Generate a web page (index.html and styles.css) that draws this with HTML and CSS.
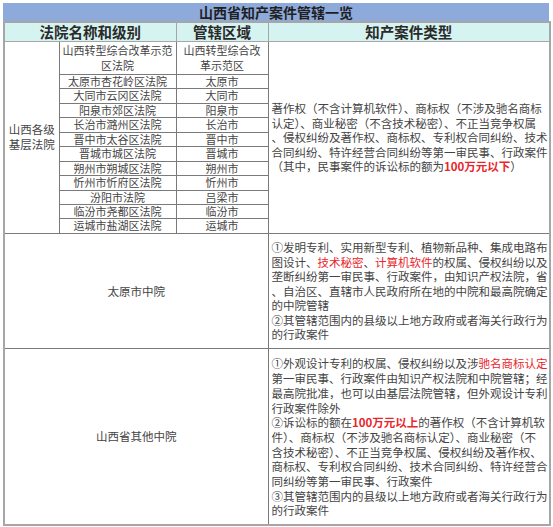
FILE: index.html
```html
<!DOCTYPE html>
<html lang="zh-CN">
<head>
<meta charset="utf-8">
<title>山西省知产案件管辖一览</title>
<link rel="stylesheet" href="styles.css">
</head>
<body>
<div class="sheet">
  <div class="title">山西省知产案件管辖一览</div>
  <table class="grid">
    <colgroup>
      <col class="c-a"><col class="c-b"><col class="c-c"><col class="c-d">
    </colgroup>
    <tr class="head">
      <th colspan="2">法院名称和级别</th>
      <th>管辖区域</th>
      <th>知产案件类型</th>
    </tr>
    <tr class="r-two">
      <td rowspan="12" class="level">山西各级<br>基层法院</td>
      <td class="court">山西转型综合改革示范<br>区法院</td>
      <td class="court">山西转型综合改<br>革示范区</td>
      <td rowspan="12" class="types">著作权（不含计算机软件）、商标权（不涉及驰名商标<br>认定）、商业秘密（不含技术秘密）、不正当竞争权属<br>、侵权纠纷及著作权、商标权、专利权合同纠纷、技术<br>合同纠纷、特许经营合同纠纷等第一审民事、行政案件<br>（其中，民事案件的诉讼标的额为<b class="hl">100万元以下</b>）</td>
    </tr>
    <tr class="r-one"><td class="court">太原市杏花岭区法院</td><td class="court">太原市</td></tr>
    <tr class="r-one"><td class="court">大同市云冈区法院</td><td class="court">大同市</td></tr>
    <tr class="r-one"><td class="court">阳泉市郊区法院</td><td class="court">阳泉市</td></tr>
    <tr class="r-one"><td class="court">长治市潞州区法院</td><td class="court">长治市</td></tr>
    <tr class="r-one"><td class="court">晋中市太谷区法院</td><td class="court">晋中市</td></tr>
    <tr class="r-one"><td class="court">晋城市城区法院</td><td class="court">晋城市</td></tr>
    <tr class="r-one"><td class="court">朔州市朔城区法院</td><td class="court">朔州市</td></tr>
    <tr class="r-one"><td class="court">忻州市忻府区法院</td><td class="court">忻州市</td></tr>
    <tr class="r-one"><td class="court">汾阳市法院</td><td class="court">吕梁市</td></tr>
    <tr class="r-one"><td class="court">临汾市尧都区法院</td><td class="court">临汾市</td></tr>
    <tr class="r-one"><td class="court">运城市盐湖区法院</td><td class="court">运城市</td></tr>
    <tr class="r-mid">
      <td colspan="3" class="big">太原市中院</td>
      <td class="types">①发明专利、实用新型专利、植物新品种、集成电路布<br>图设计、<span class="hl">技术秘密</span>、<span class="hl">计算机软件</span>的权属、侵权纠纷以及<br>垄断纠纷第一审民事、行政案件，由知识产权法院，省<br>、自治区、直辖市人民政府所在地的中院和最高院确定<br>的中院管辖<br>②其管辖范围内的县级以上地方政府或者海关行政行为<br>的行政案件</td>
    </tr>
    <tr class="r-other">
      <td colspan="3" class="big">山西省其他中院</td>
      <td class="types">①外观设计专利的权属、侵权纠纷以及涉<span class="hl">驰名商标认定</span><br>第一审民事、行政案件由知识产权法院和中院管辖；经<br>最高院批准，也可以由基层法院管辖，但外观设计专利<br>行政案件除外<br>②诉讼标的额在<b class="hl">100万元以上</b>的著作权（不含计算机软<br>件）、商标权（不涉及驰名商标认定）、商业秘密（不<br>含技术秘密）、不正当竞争权属、侵权纠纷及著作权、<br>商标权、专利权合同纠纷、技术合同纠纷、特许经营合<br>同纠纷等第一审民事、行政案件<br>③其管辖范围内的县级以上地方政府或者海关行政行为<br>的行政案件</td>
    </tr>
  </table>
</div>
</body>
</html>
```

FILE: styles.css
```css
html, body {
  margin: 0;
  padding: 0;
  background: #ffffff;
}

body {
  padding: 3px 4px 0 3px;
  font-family: "Noto Sans CJK SC", "Noto Sans", sans-serif;
  color: #444444;
}

.sheet {
  width: 546px;
}

.title {
  height: 18px;
  line-height: 18px;
  background: #8eaadb;
  text-align: center;
  font-size: 14px;
  font-weight: bold;
  color: #1f1f1f;
}

.grid {
  width: 546px;
  border-collapse: collapse;
  table-layout: fixed;
  border: 2px solid #a6a6a6;
}

.c-a { width: 55px; }
.c-b { width: 117px; }
.c-c { width: 92px; }
.c-d { width: 282px; }

.grid th,
.grid td {
  border: 1px solid #7a7a7a;
  padding: 0;
  vertical-align: middle;
}

.head th {
  height: 18px;
  line-height: 18px;
  background: #d5f3f0;
  font-size: 14.5px;
  font-weight: bold;
  color: #2a2a2a;
  text-align: center;
  border-color: #a6a6a6;
}

.court {
  font-size: 11px;
  line-height: 13.4px;
  text-align: center;
  white-space: nowrap;
  overflow: hidden;
}

.r-two td.court {
  height: 32px;
  line-height: 15px;
}

.r-one td {
  height: 13.45px;
}

.level {
  font-size: 11.5px;
  line-height: 15px;
  text-align: center;
}

.types {
  font-size: 11.5px;
  line-height: 14.5px;
  text-align: left;
  padding: 0 1px 0 3px !important;
  white-space: nowrap;
  overflow: hidden;
}

.big {
  font-size: 11.5px;
  text-align: center;
}

.r-mid td {
  height: 114px;
}

.r-other td {
  height: 173px;
  line-height: 14.7px;
}

.r-other td.types {
  padding-top: 2px !important;
}

.hl {
  color: #e8262c;
}

b.hl {
  font-weight: bold;
}
```
